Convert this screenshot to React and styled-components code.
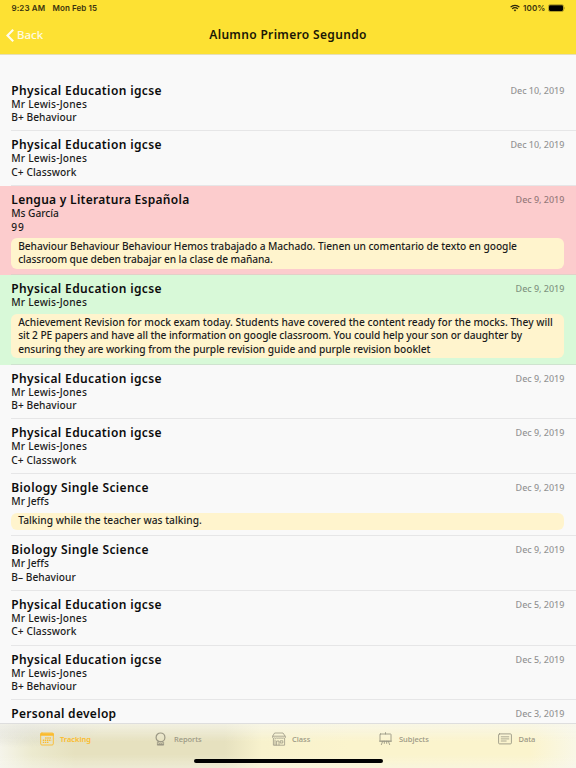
import React from "react";
import styled, { createGlobalStyle } from "styled-components";

const Global = createGlobalStyle`
  * { box-sizing: border-box; }
  body { margin: 0; background: #f9f9f9; font-family: "Noto Sans", "Open Sans", sans-serif; color: #000; }
`;
const Screen = styled.div`
  width: 576px; height: 768px; overflow: hidden;
  display: flex; flex-direction: column; background: #f9f9f9;
`;
const Header = styled.header`
  flex: none; height: 54px; background: #fde133;
  box-shadow: 0 1px 0 #e6dfb8;
`;
const StatusBar = styled.div`
  height: 16px; padding: 0 10px 0 11.5px;
  display: flex; align-items: center;
  font: 600 8px/16px Inter, sans-serif; color: #3a330e;
  white-space: nowrap;
`;
const Clock = styled.span`width: 41px; letter-spacing: 0.1px;`;
const Today = styled.span`flex: 1; letter-spacing: 0.08px;`;
const Charge = styled.span`margin: 0 2.5px 0 3px; letter-spacing: 0.12px;`;
const NavBar = styled.div`
  height: 38px; padding-left: 6px;
  display: grid; grid-template-columns: 1fr auto 1fr; align-items: center;
`;
const Back = styled.div`
  display: flex; align-items: center; gap: 3px;
  font-size: 11.5px; font-weight: 500; line-height: 16px; color: #fffbe2;
`;
const Heading = styled.h1`
  margin: 0; padding-right: 6px; font-size: 12px; font-weight: 600; line-height: 16px;
  letter-spacing: 0.33px; color: #1a1705;
`;
const List = styled.main`
  flex: 1; min-height: 0; overflow: hidden; padding-top: 22.8px;
`;
const tones = { plain: "#f9f9f9", bad: "#fccccd", good: "#d8f9d8" };
const rules = { plain: "#e6e6e7", bad: "#e3cfc8", good: "#cfe3cf" };
const Entry = styled.article`
  padding-left: 11.3px; background: ${(p) => tones[p.$tone]};
  & > div { border-bottom: 1px solid ${(p) => rules[p.$tone]}; }
`;
const EntryBody = styled.div`padding: 6px 11.7px 5.65px 0;`;
const EntryHead = styled.div`
  display: flex; justify-content: space-between; height: 15px; line-height: 15px;
  white-space: nowrap;
`;
const Subject = styled.h2`
  margin: 0; font-size: 12px; font-weight: 600; line-height: 15px; color: #0c0c0c;
  letter-spacing: ${(p) => p.$track}px;
`;
const When = styled.time`font-size: 9px; font-weight: 500; letter-spacing: -0.03px; color: #000; opacity: 0.42;`;
const Line = styled.div`
  height: 13.5px; font-size: 10.2px; font-weight: 500; line-height: 13.5px;
  white-space: nowrap; color: #1c1c1c; letter-spacing: ${(p) => p.$track}px;
`;
const Note = styled.div`
  margin-top: 4px; padding: 1.85px 6.9px; border-radius: 6px; background: #fff4cd;
`;
const TabBar = styled.nav`
  flex: none; height: 45.5px; border-top: 1px solid #dedede;
  display: flex; flex-direction: column; align-items: center;
  background:
    linear-gradient(to bottom, rgba(247,247,240,.7), rgba(247,247,240,0) 40%, rgba(247,247,240,0) 70%, rgba(247,247,240,.45)),
    radial-gradient(ellipse 80px 24px at 26px 0, rgba(200,200,194,.65), transparent),
    linear-gradient(to right, #f5f4ea 0, #eceacf 32px, #e6e1bf 75px, #e6e1bf 225px, #f8f2cd 262px, #fbf4cd 350px, #fbf4cd 530px, #f9f7e6 576px);
`;
const Tabs = styled.div`
  align-self: stretch; height: 35px; padding: 0 5px;
  display: grid; grid-template-columns: 134px 117px 107px 119px 1fr;
`;
const Tab = styled.div`
  display: flex; align-items: center; gap: ${(p) => p.$gap || 6}px; padding: 0 0 5px ${(p) => p.$inset}px;
  font-size: 7.5px; font-weight: ${(p) => (p.$active ? 600 : 500)}; line-height: 12px;
  letter-spacing: ${(p) => p.$track}px; color: ${(p) => (p.$active ? "#fbbb2c" : "#9a9784")};
`;
const HomeBar = styled.div`width: 189px; height: 4px; border-radius: 2px; background: #000; margin-top: 0.5px;`;

const Glyph = ({ w = 14, h = 14, children }) => (
  <svg width={w} height={h} viewBox={`0 0 ${w} ${h}`} fill="none" stroke="currentColor" strokeWidth="0.9" strokeLinejoin="round" strokeLinecap="round">{children}</svg>
);
const CalendarIcon = () => (
  <Glyph><rect x=".7" y="1" width="12.6" height="12" rx="1.2" /><path d="M.8 1.9h12.4M.8 3h12.4" strokeWidth="1.5" />
    <path d="M5.2 6h6.2M2.8 8.2h8.6M2.8 10.4h6.2" strokeWidth="1.4" strokeDasharray="1.4 .7" strokeLinecap="butt" /></Glyph>
);
const RibbonIcon = () => (
  <Glyph w={11}><circle cx="5.5" cy="5.4" r="4.4" strokeWidth="1.2" /><path d="M3.3 9.6h4.4M2.4 10.2v3h6.2v-3L5.5 12Z" strokeWidth=".8" /><path d="M2.8 12.4h5.4" strokeWidth="1.3" /></Glyph>
);
const SchoolIcon = () => (
  <Glyph><path d="M3 1h8l2.3 3.4v1.3c-.5 1-1.7 1-2.2 0-.5 1-1.6 1-2.1 0-.5 1-1.6 1-2 0-.5 1-1.6 1-2.1 0-.5 1-1.6 1-2.1 0-.5 1-1.6 1-2.1 0V4.4ZM1.4 7v6.2h11.2V7M1 4.2h12M4.6 13V9H7v4M8.6 8.8h2.2V11H8.6zM3 8v5" strokeWidth=".8" /></Glyph>
);
const EaselIcon = () => (
  <Glyph w={13}><rect x="1" y="2" width="11" height="7.2" rx=".4" /><path d="M6.5.6V2M3.7 9.2 2.4 12.6M9.3 9.2l1.3 3.4M5.3 9.2v2.2M7.7 9.2v2.2M.4 9.2h12.2" /></Glyph>
);
const DataIcon = () => (
  <Glyph><rect x=".6" y="1.9" width="12.8" height="10" rx="1" /><path d="M3.2 4.8h7.6M3.2 6.9h7.6M3.2 9h5" strokeWidth=".8" /></Glyph>
);

const PE = ["Physical Education igcse", 0.37];
const BIO = ["Biology Single Science", 0.38];
const LEWIS = ["Mr Lewis-Jones", 0.2];
const JEFFS = ["Mr Jeffs", 0.03];
const B_PLUS = ["B+ Behaviour", 0.03];
const C_PLUS = ["C+ Classwork", 0.07];
const entries = [
  { subject: PE, date: "Dec 10, 2019", lines: [LEWIS, B_PLUS] },
  { subject: PE, date: "Dec 10, 2019", lines: [LEWIS, C_PLUS] },
  { tone: "bad", subject: ["Lengua y Literatura Española", 0.28], date: "Dec 9, 2019", lines: [["Ms García", -0.05], ["99", 0.8]],
    note: [["Behaviour Behaviour Behaviour Hemos trabajado a Machado. Tienen un comentario de texto en google", -0.053], ["classroom que deben trabajar en la clase de mañana.", -0.09]] },
  { tone: "good", subject: PE, date: "Dec 9, 2019", lines: [LEWIS],
    note: [["Achievement Revision for mock exam today. Students have covered the content ready for the mocks. They will", 0], ["sit 2 PE papers and have all the information on google classroom. You could help your son or daughter by", -0.084], ["ensuring they are working from the purple revision guide and purple revision booklet", -0.035]] },
  { subject: PE, date: "Dec 9, 2019", lines: [LEWIS, B_PLUS] },
  { subject: PE, date: "Dec 9, 2019", lines: [LEWIS, C_PLUS] },
  { subject: BIO, date: "Dec 9, 2019", lines: [JEFFS], note: [["Talking while the teacher was talking.", 0.03]] },
  { subject: BIO, date: "Dec 9, 2019", lines: [JEFFS, ["B– Behaviour", 0.02]] },
  { subject: PE, date: "Dec 5, 2019", lines: [LEWIS, C_PLUS] },
  { subject: PE, date: "Dec 5, 2019", lines: [LEWIS, B_PLUS] },
  { subject: ["Personal develop", 0.3], date: "Dec 3, 2019", lines: [] },
];
const tabs = [
  { name: "Tracking", icon: CalendarIcon, inset: 35, track: -0.03, active: true },
  { name: "Reports", icon: RibbonIcon, inset: 16.3, gap: 7.7, track: -0.05 },
  { name: "Class", icon: SchoolIcon, inset: 16, track: -0.01 },
  { name: "Subjects", icon: EaselIcon, inset: 16, gap: 7, track: -0.02 },
  { name: "Data", icon: DataIcon, inset: 16, gap: 6.5, track: -0.06 },
];

export default function App() {
  return (
    <Screen>
      <Global />
      <Header>
        <StatusBar>
          <Clock>9:23 AM</Clock><Today>Mon Feb 15</Today>
          <svg width="10" height="8" viewBox="0 0 10 8" fill="none" stroke="#2b260b" strokeWidth="1.3"><path d="M.6 3.1a6.3 6.3 0 0 1 8.8 0M2.2 4.9a4 4 0 0 1 5.6 0" /><path d="m5 7.4-1.3-1.3a1.9 1.9 0 0 1 2.6 0Z" fill="#2b260b" stroke="none" /></svg>
          <Charge>100%</Charge>
          <svg width="18" height="8" viewBox="0 0 18 8"><rect x=".4" y=".7" width="15.2" height="6.8" rx="1.8" fill="none" stroke="#8f8020" strokeWidth=".7" /><rect x="1" y="1.3" width="14" height="5.6" rx="1.1" fill="#000" /><path d="M16.4 3v2.2c.8-.3.8-1.9 0-2.2Z" fill="#8f8020" /></svg>
        </StatusBar>
        <NavBar>
          <Back>
            <svg width="8" height="13" viewBox="0 0 8 13" fill="none" stroke="#fffdf0" strokeWidth="2.1"><path d="M7.2.8 1.5 6.5l5.7 5.7" /></svg>
            Back
          </Back>
          <Heading>Alumno Primero Segundo</Heading>
        </NavBar>
      </Header>
      <List>
        {entries.map(({ tone = "plain", subject, date, lines, note }, i) => (
          <Entry key={i} $tone={tone}>
            <EntryBody>
              <EntryHead><Subject $track={subject[1]}>{subject[0]}</Subject><When>{date}</When></EntryHead>
              {lines.map(([text, track]) => <Line key={text} $track={track}>{text}</Line>)}
              {note && <Note>{note.map(([text, track]) => <Line key={text} $track={track}>{text}</Line>)}</Note>}
            </EntryBody>
          </Entry>
        ))}
      </List>
      <TabBar>
        <Tabs>
          {tabs.map(({ name, icon: Icon, inset, gap, track, active }) => (
            <Tab key={name} $inset={inset} $gap={gap} $track={track} $active={active}><Icon />{name}</Tab>
          ))}
        </Tabs>
        <HomeBar />
      </TabBar>
    </Screen>
  );
}
